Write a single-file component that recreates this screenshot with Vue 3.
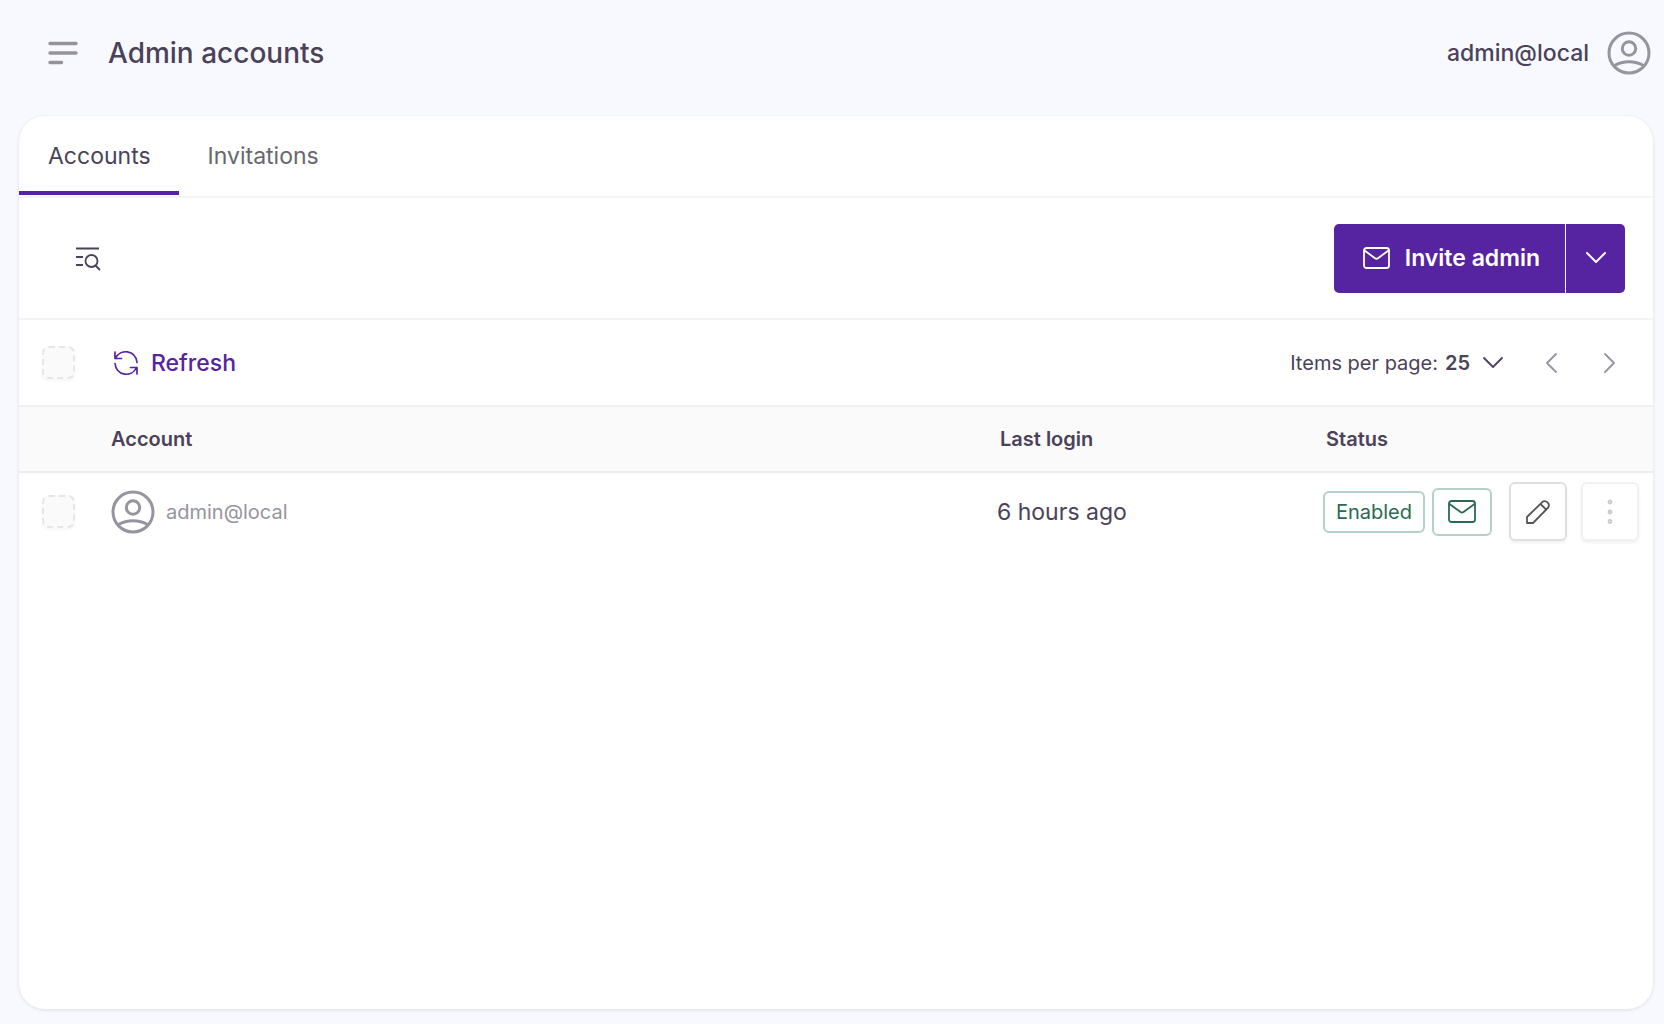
<script setup>
import { ref } from 'vue'

const tabs = ['Accounts', 'Invitations']
const activeTab = ref('Accounts')
const perPage = ref(25)
const pageSizes = [25, 50, 75]

const accounts = [
  { id: 1, email: 'admin@local', lastLogin: '6 hours ago', status: 'Enabled' }
]
</script>

<template>
  <div class="page">
    <header class="header">
      <button class="icon-btn menu" aria-label="Menu">
        <svg width="30" height="24" viewBox="0 0 30 24">
          <path d="M2 2.500H28M2 12H28M2 21.500H13.500" />
        </svg>
      </button>
      <h1>Admin accounts</h1>
      <button class="icon-btn user">
        <span>admin@local</span>
        <svg class="avatar" width="44" height="44" viewBox="0 0 44 44">
          <circle cx="22" cy="22" r="20" />
          <circle cx="22" cy="17.500" r="6.700" />
          <path d="M7.500 34.500C16 29.500 28 29.500 36.500 34.500" />
        </svg>
      </button>
    </header>

    <main class="card">
      <nav class="tabs">
        <button v-for="tab in tabs" :key="tab" :class="['tab', { active: tab === activeTab }]" @click="activeTab = tab">
          {{ tab }}
        </button>
      </nav>

      <div class="toolbar">
        <button class="icon-btn search" aria-label="Search">
          <svg width="28" height="26" viewBox="0 0 28 26">
            <path d="M2 3.500H25M2 12H9M2 20H9M21.500 20.500L26 25" />
            <circle cx="17.500" cy="16" r="6" />
          </svg>
        </button>
        <div class="split">
          <button class="primary invite">
            <svg width="28" height="22" viewBox="0 0 28 22">
              <rect x="1" y="1" width="25" height="20" rx="2.500" />
              <path d="M1.500 3.500L12 11.200Q13.500 12.300 15 11.200L25.500 3.500" />
            </svg>
            Invite admin
          </button>
          <button class="primary more" aria-label="More options">
            <svg width="20" height="12" viewBox="0 0 20 12"><path d="M1 1L10 10L19 1" /></svg>
          </button>
        </div>
      </div>

      <div class="listbar">
        <input type="checkbox" aria-label="Select all" disabled>
        <button class="icon-btn refresh">
          <svg width="26" height="26" viewBox="0 0 26 26">
            <path d="M2 2V8.500H8.500M2.500 8.500C7 -1.500 22.500 -.5 24 12.500M24 24V17.500H17.500M23.500 17.500C19 27.500 3.500 26.500 2 13.500" />
          </svg>
          Refresh
        </button>
        <div class="pager">
          <label for="per-page">Items per page:</label>
          <select id="per-page" v-model="perPage">
            <option v-for="size in pageSizes" :key="size" :value="size">{{ size }}</option>
          </select>
          <svg class="chevron" width="20" height="12" viewBox="0 0 20 12"><path d="M1 1L10 10L19 1" /></svg>
          <button class="icon-btn step" aria-label="Previous page" disabled>
            <svg width="12" height="20" viewBox="0 0 12 20"><path d="M10 1L1 10L10 19" /></svg>
          </button>
          <button class="icon-btn step" aria-label="Next page" disabled>
            <svg width="12" height="20" viewBox="0 0 12 20"><path d="M1 1L10 10L1 19" /></svg>
          </button>
        </div>
      </div>

      <table>
        <thead>
          <tr>
            <th class="col-check"></th>
            <th>Account</th>
            <th class="col-login">Last login</th>
            <th class="col-status">Status</th>
          </tr>
        </thead>
        <tbody>
          <tr v-for="account in accounts" :key="account.id">
            <td class="col-check">
              <input type="checkbox" :aria-label="'Select ' + account.email" disabled>
            </td>
            <td>
              <div class="account">
                <svg class="avatar" width="44" height="44" viewBox="0 0 44 44">
                  <circle cx="22" cy="22" r="20" />
                  <circle cx="22" cy="17.500" r="6.700" />
                  <path d="M7.500 34.500C16 29.500 28 29.500 36.500 34.500" />
                </svg>
                <span>{{ account.email }}</span>
              </div>
            </td>
            <td class="login">{{ account.lastLogin }}</td>
            <td>
              <div class="status">
                <span class="badge">{{ account.status }}</span>
                <span class="badge mail">
                  <svg width="28" height="23" viewBox="0 0 28 23">
                    <rect x="1" y="1" width="26" height="21" rx="2.500" />
                    <path d="M1.500 4L12.500 12Q14 13 15.500 12L26.500 4" />
                  </svg>
                </span>
                <button class="action edit" aria-label="Edit">
                  <svg width="24" height="24" viewBox="0 0 24 24">
                    <path d="M1 23V17L16.500 1.800C20 -.5 24.500 4 22.200 7.500L7 23ZM14.500 4L20 9.500" />
                  </svg>
                </button>
                <button class="action" aria-label="More actions" disabled>
                  <svg width="6" height="26" viewBox="0 0 6 26">
                    <circle cx="3" cy="3" r="1.500" />
                    <circle cx="3" cy="13" r="1.500" />
                    <circle cx="3" cy="22.500" r="1.500" />
                  </svg>
                </button>
              </div>
            </td>
          </tr>
        </tbody>
      </table>
    </main>
  </div>
</template>

<style>
body { background: #f8f9fe; }
</style>

<style scoped>
* { box-sizing: border-box; }
.page { display: flex; flex-direction: column; min-height: 100vh; padding: 0 11px 15px 19px; font-family: Inter, "Liberation Sans", sans-serif; color: #4b4259; }
button, select { font-family: inherit; color: inherit; cursor: pointer; }
button { display: flex; align-items: center; padding: 0; }
svg { display: block; flex: none; fill: none; stroke: currentColor; stroke-width: 1.8; stroke-linecap: round; stroke-linejoin: round; }
.icon-btn { border: none; background: none; }

.header { display: flex; align-items: center; height: 116px; padding: 0 2px 11px 29px; }
.header h1 { margin: 0 auto 0 30px; font-size: 28px; font-weight: 500; }
.menu svg { color: #96929c; stroke-width: 3.4; }
.user { gap: 18px; font-size: 23px; font-weight: 500; }
.avatar { color: #96949e; stroke-width: 3; }

.card { flex: 1; background: white; border-radius: 26px; box-shadow: 0 1px 3px 1px rgba(0, 0, 0, .07); overflow: hidden; }
.tabs { display: flex; height: 82px; border-bottom: 2px solid #f4f4f4; }
.tab { height: 79px; padding: 4px 28px 0 29px; border: none; border-bottom: 4px solid transparent; background: none; font-size: 23px; color: #68666e; }
.tab.active { border-color: #5624a1; color: #4b4259; }

.toolbar { display: flex; align-items: center; justify-content: space-between; height: 122px; padding: 0 28px 0 55px; border-bottom: 2px solid #f4f4f4; }
.search svg { stroke-linecap: butt; }
.split { display: flex; gap: 1px; height: 69px; }
.primary { border: none; background: #5624a1; color: white; font-size: 23px; font-weight: 600; }
.invite { gap: 14px; padding: 0 25px 0 29px; border-radius: 5px 0 0 5px; }
.more { justify-content: center; width: 59px; border-radius: 0 5px 5px 0; }
.more svg { stroke-width: 2; }

.listbar { display: flex; align-items: center; height: 87px; padding: 0 37px 0 23px; border-bottom: 2px solid #f0f0f0; }
input { display: block; width: 33px; height: 33px; margin: 0; appearance: none; border: 2px dashed #e6e6e6; border-radius: 7px; background: #fafafa; box-shadow: 0 2px 3px rgba(0, 0, 0, .04); }
.refresh { gap: 12px; margin-left: 38px; font-size: 23px; font-weight: 500; color: #5624a1; }
.refresh svg { stroke-width: 1.7; }
.pager { display: flex; align-items: center; margin-left: auto; font-size: 20px; }
select { margin-left: 7px; padding: 0; appearance: none; border: none; background: none; font-size: 20px; font-weight: 600; }
.chevron { margin-left: 12px; }
.step { margin-left: 43px; color: #96949e; }
.step + .step { margin-left: 46px; }

table { width: 100%; border-collapse: collapse; table-layout: fixed; text-align: left; }
th { height: 65px; padding: 0; border-bottom: 2px solid #ededed; background: #fafafa; font-size: 20px; font-weight: 600; }
td { height: 78px; padding: 0; }
.col-check { width: 92px; padding-left: 23px; }
.col-login { width: 326px; padding-left: 3px; }
.col-status { width: 330px; padding-left: 3px; }
.account { display: flex; align-items: center; gap: 11px; font-size: 20px; color: #96949e; }
.login { font-size: 23px; }

.status { display: flex; align-items: center; }
.badge { display: flex; align-items: center; justify-content: center; width: 102px; height: 42px; border: 2px solid #b3d1c6; border-radius: 6px; font-size: 20px; color: #2b6a52; }
.badge.mail { width: 60px; height: 48px; margin: 0 17px 0 7px; }
.action { justify-content: center; width: 58px; height: 59px; border: 2px solid #f1f1f1; border-radius: 6px; background: white; box-shadow: 0 2px 3px rgba(0, 0, 0, .06); color: #c9c9c9; }
.action.edit { margin-right: 14px; border-color: #dfdfdf; color: #555; }
</style>
